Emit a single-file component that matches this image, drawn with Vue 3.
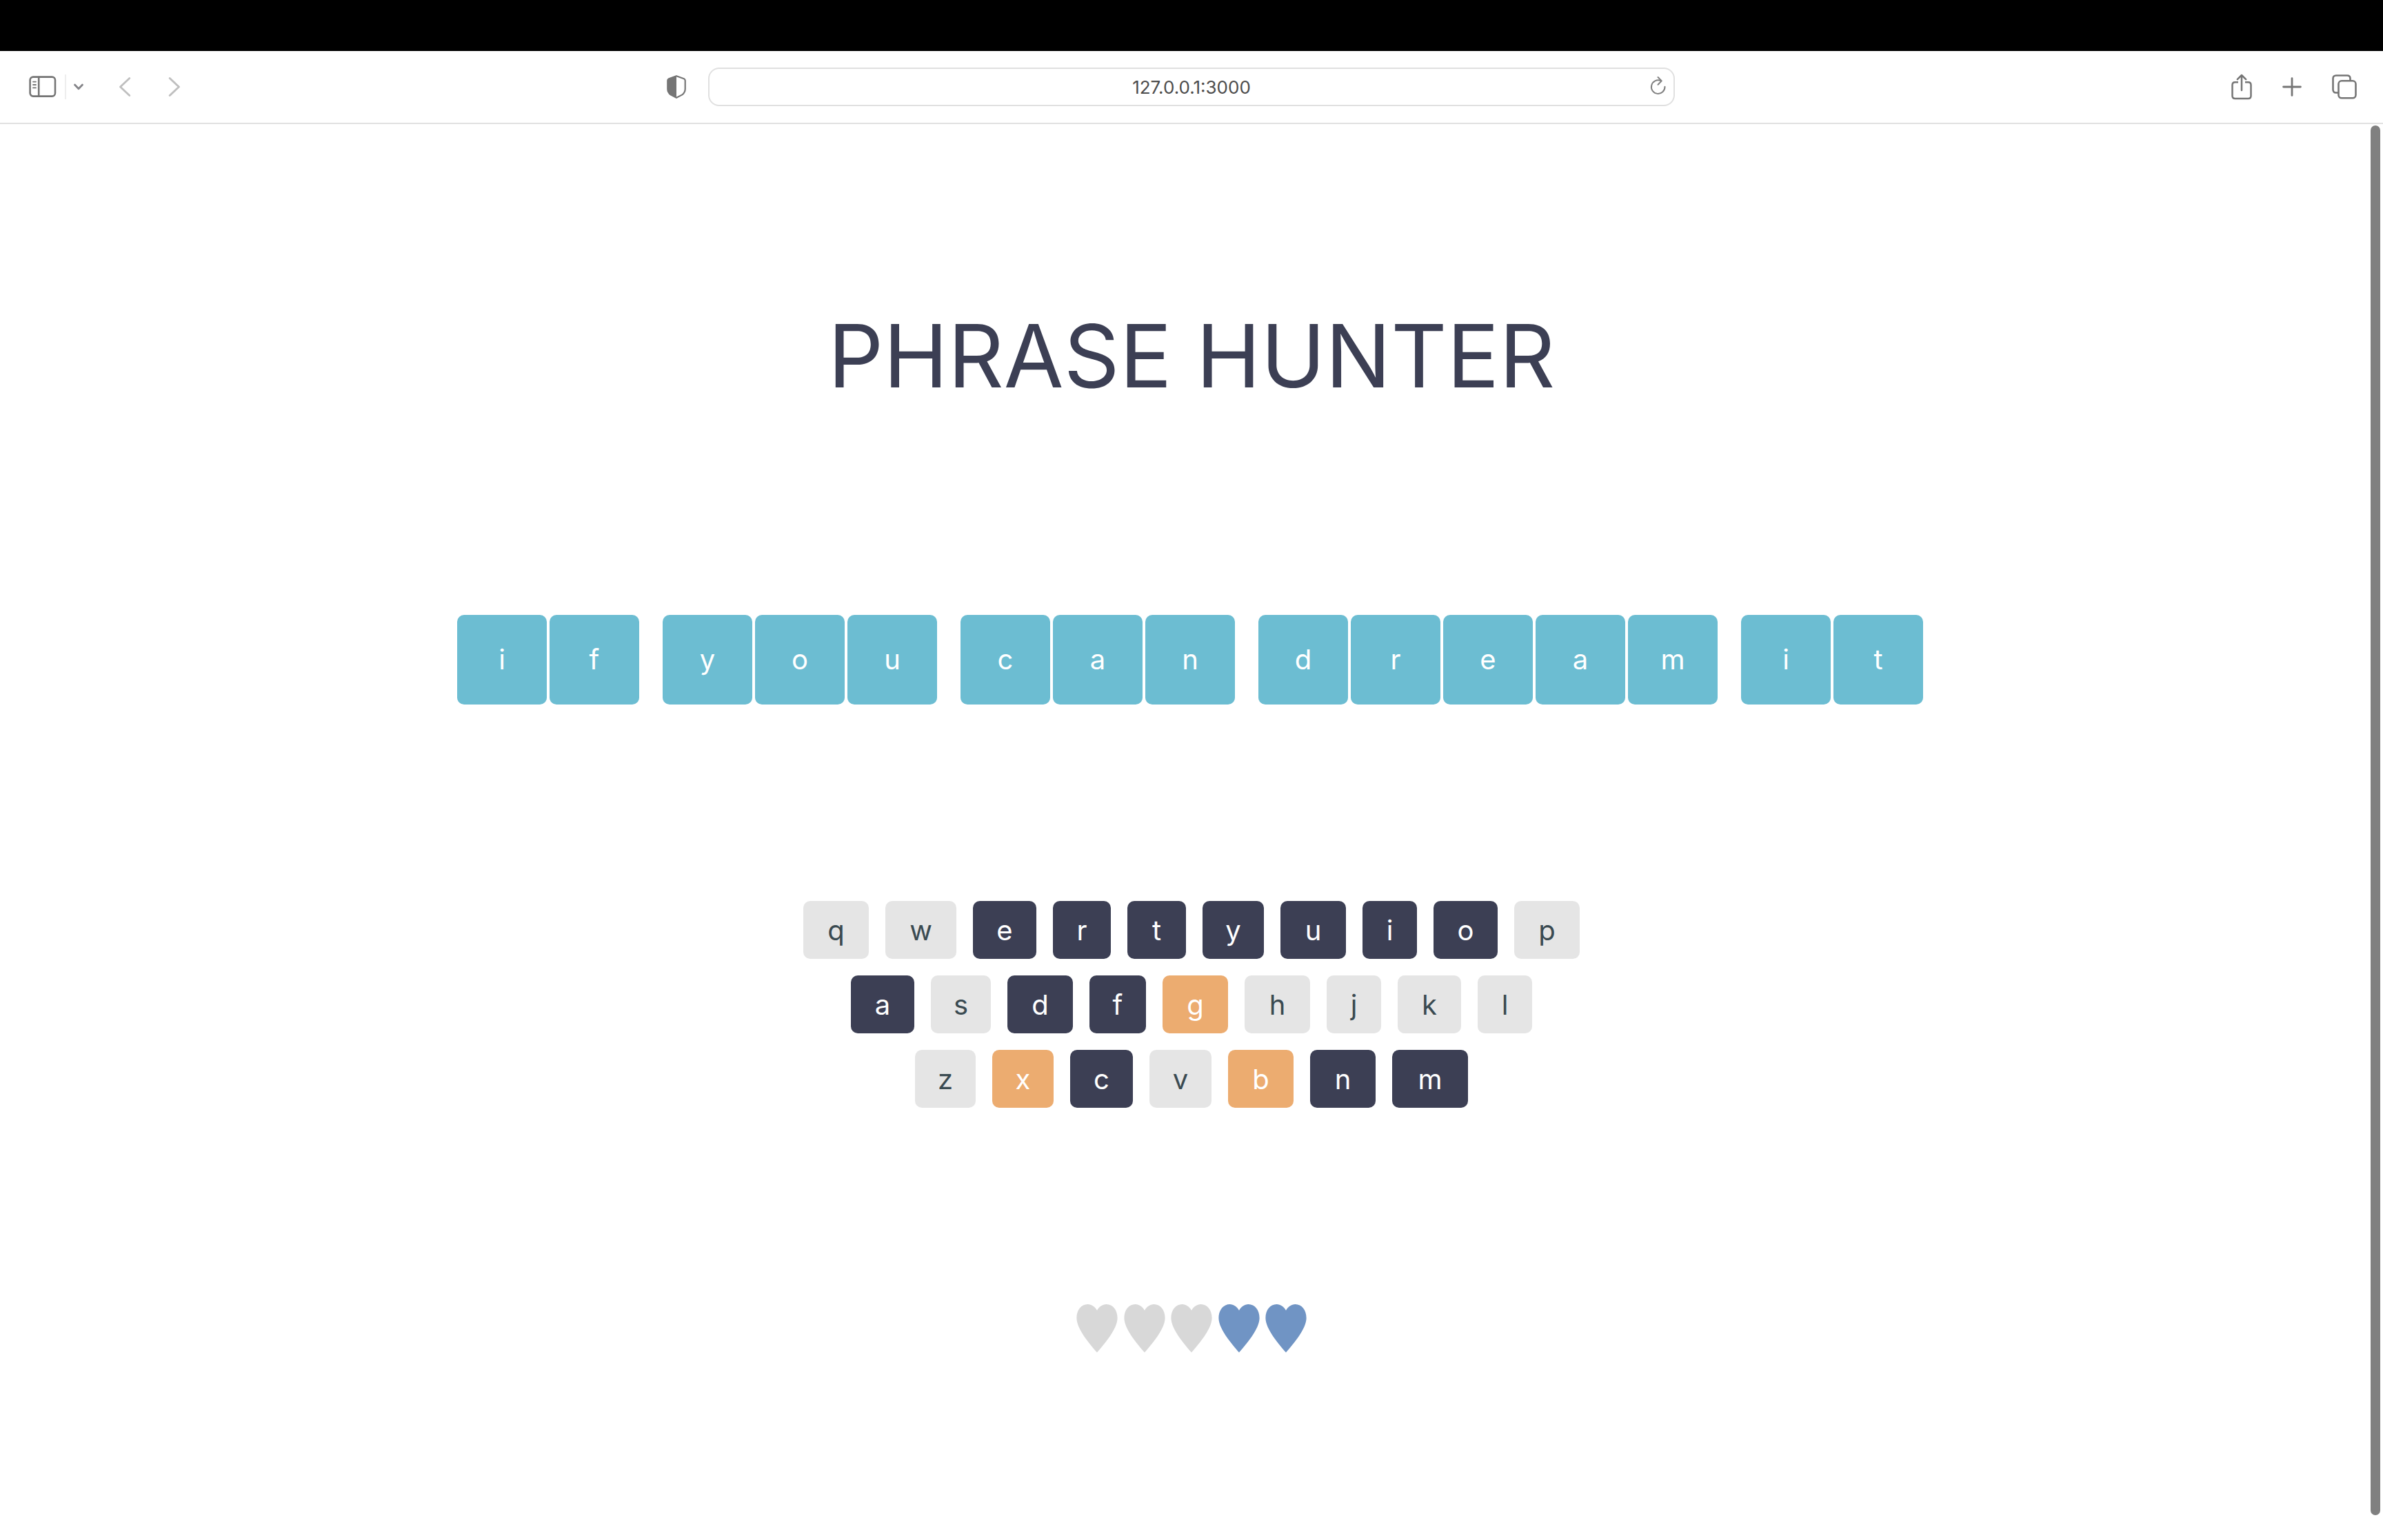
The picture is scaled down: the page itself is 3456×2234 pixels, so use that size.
<script setup>
import { ref } from 'vue'

const address = ref('127.0.0.1:3000')

const words = ['if', 'you', 'can', 'dream', 'it']

const keyWidths = {
  q: 95, w: 103, e: 92, r: 84, t: 85, y: 89, u: 95, i: 79, o: 93, p: 95,
  a: 92, s: 87, d: 95, f: 82, g: 95, h: 95, j: 79, k: 92, l: 79,
  z: 88, x: 89, c: 91, v: 90, b: 95, n: 95, m: 110,
}
const rows = ['qwertyuiop', 'asdfghjkl', 'zxcvbnm']
const missed = 'gxb'

function keyState(letter) {
  if (words.join('').includes(letter)) return 'chosen'
  if (missed.includes(letter)) return 'wrong'
  return ''
}

const lives = [false, false, false, true, true]
</script>

<template>
  <div class="window">
    <div class="menu-strip"></div>
    <header class="toolbar">
      <div class="tools tools-left">
        <button class="tool" aria-label="Sidebar">
          <svg width="40" height="32" viewBox="0 0 40 32" fill="none" stroke="#757575" stroke-width="2.6" stroke-linecap="round">
            <rect x="1.6" y="1.6" width="36.4" height="28" rx="4.5" />
            <path d="M14.2 2v27.5" />
            <path d="M6 8.6h4M6 13h4M6 17.4h4" stroke-width="1.8" />
          </svg>
        </button>
        <span class="divider"></span>
        <button class="tool chevron" aria-label="Tab groups">
          <svg width="16" height="12" viewBox="0 0 16 12" fill="none" stroke="#858589" stroke-width="2.8" stroke-linecap="round" stroke-linejoin="round">
            <path d="M2.5 3l5.5 5.800L13.500 3" />
          </svg>
        </button>
        <button class="tool back" aria-label="Back">
          <svg width="18" height="30" viewBox="0 0 18 30" fill="none" stroke="#bfbfbf" stroke-width="2.8" stroke-linecap="round" stroke-linejoin="round">
            <path d="M15.800 2.500L2.500 15l13.300 12.500" />
          </svg>
        </button>
        <button class="tool forward" aria-label="Forward">
          <svg width="18" height="30" viewBox="0 0 18 30" fill="none" stroke="#bfbfbf" stroke-width="2.8" stroke-linecap="round" stroke-linejoin="round">
            <path d="M2.200 2.500L15.500 15L2.200 27.500" />
          </svg>
        </button>
        <button class="tool shield" aria-label="Privacy report">
          <svg width="28" height="34" viewBox="0 0 28 34">
            <path d="M14 1.200L25 5.200Q26.700 6 26.700 7.800V20Q26.700 25.500 22 28.600L14 32.800L6 28.600Q1.300 25.500 1.300 20V7.800Q1.300 6 3 5.200Z" fill="none" stroke="#757575" stroke-width="2.2" stroke-linejoin="round" />
            <path d="M14 1.200L3 5.200Q1.300 6 1.300 7.800V20Q1.300 25.500 6 28.600L14 32.800Z" fill="#757575" />
          </svg>
        </button>
      </div>
      <div class="address">
        <input v-model="address" type="text" aria-label="Address" />
        <button class="tool reload" aria-label="Reload">
          <svg width="24" height="28" viewBox="0 0 24 28" fill="none" stroke="#808080" stroke-width="2" stroke-linecap="round" stroke-linejoin="round">
            <path d="M21.500 15.800A9.800 9.800 0 1 1 15.500 7.100" />
            <path d="M11.500 2l5.300 5.400l-5.300 5.400" />
          </svg>
        </button>
      </div>
      <div class="tools tools-right">
        <button class="tool" aria-label="Share">
          <svg width="30" height="38" viewBox="0 0 30 38" fill="none" stroke="#757575" stroke-width="2.5" stroke-linejoin="round">
            <path d="M10 12.300H5.500Q1.500 12.300 1.500 16.300V32Q1.500 36 5.500 36H24.500Q28.500 36 28.500 32V16.300Q28.500 12.300 24.500 12.300H20" />
            <path d="M15 24V2.200M8.800 8.200L15 2L21.200 8.200" stroke-linecap="round" />
          </svg>
        </button>
        <button class="tool" aria-label="New tab">
          <svg width="28" height="28" viewBox="0 0 28 28" fill="none" stroke="#757575" stroke-width="2.8" stroke-linecap="round">
            <path d="M14 1.600v24.800M1.600 14h24.800" />
          </svg>
        </button>
        <button class="tool" aria-label="Tab overview">
          <svg width="36" height="36" viewBox="0 0 36 36" fill="none" stroke="#757575" stroke-width="2.6">
            <path d="M9 26.500H6Q1.500 26.500 1.500 22V6Q1.500 1.500 6 1.500H22Q26.500 1.500 26.500 6V9" />
            <rect x="9.500" y="9.300" width="25" height="25" rx="4.5" />
          </svg>
        </button>
      </div>
    </header>

    <main class="game">
      <h1>PHRASE HUNTER</h1>
      <div class="phrase">
        <ul v-for="word in words" :key="word" class="word">
          <li v-for="(letter, i) in word" :key="i">{{ letter }}</li>
        </ul>
      </div>
      <div class="keyboard">
        <div v-for="row in rows" :key="row" class="keyrow">
          <button
            v-for="letter in row"
            :key="letter"
            class="key"
            :class="keyState(letter)"
            :style="{ width: keyWidths[letter] + 'px' }"
          >{{ letter }}</button>
        </div>
      </div>
      <ol class="lives">
        <li v-for="(alive, i) in lives" :key="i" :class="{ alive }">
          <svg width="60" height="70" viewBox="0 0 60 70">
            <path d="M30 9C27 3.500 22 0 16.500 0C7 0 .4 8.500 .4 20C.4 36 20 58.500 30 70C40 58.500 59.600 36 59.600 20C59.600 8.500 53 0 43.500 0C38 0 33 3.500 30 9Z" />
          </svg>
        </li>
      </ol>
      <div class="scroll-thumb"></div>
    </main>
  </div>
</template>

<style>
body {
  margin: 0;
  background: #fff;
}
</style>

<style scoped>
.window {
  min-height: 100vh;
  display: flex;
  flex-direction: column;
  font-family: Inter, "Liberation Sans", sans-serif;
}
.menu-strip {
  height: 74px;
  background: #000;
}
.toolbar {
  display: grid;
  grid-template-columns: 1fr minmax(0, 1402px) 1fr;
  align-items: center;
  height: 104px;
  border-bottom: 2px solid #e0e0e0;
}
.tools {
  display: flex;
  align-items: center;
}
.tools-left {
  padding: 0 32px 0 42px;
}
.tools-right {
  justify-content: flex-end;
  gap: 44px;
  padding-right: 38px;
}
.tool {
  display: flex;
  padding: 0;
  border: 0;
  background: none;
}
.divider {
  width: 2px;
  height: 36px;
  margin-left: 12px;
  background: #eee;
}
.chevron {
  margin-left: 10px;
}
.back {
  margin-left: 50px;
}
.forward {
  margin-left: 54px;
}
.shield {
  margin-left: auto;
}
.address {
  position: relative;
}
.address input {
  display: block;
  box-sizing: border-box;
  width: 100%;
  height: 56px;
  padding: 0 48px;
  border: 2px solid #e0e0e0;
  border-radius: 16px;
  background: #fff;
  color: #4c4c4c;
  font: 26px Inter, "Liberation Sans", sans-serif;
  text-align: center;
}
.reload {
  position: absolute;
  top: 12px;
  right: 12px;
}
.game {
  position: relative;
  flex: 1;
  display: flex;
  flex-direction: column;
  align-items: center;
  padding: 260px 0;
}
h1 {
  margin: 0 0 300px;
  color: #3c3f54;
  font-size: 126px;
  font-weight: 400;
  line-height: 152px;
}
.phrase {
  display: flex;
  gap: 30px;
  margin-bottom: 285px;
}
.word,
.lives {
  display: flex;
  margin: 0;
  padding: 0;
  list-style: none;
}
.word li {
  width: 130px;
  height: 130px;
  margin-right: 4px;
  border-radius: 10px;
  background: #6cbdd2;
  color: #fff;
  font-size: 40px;
  line-height: 130px;
  text-align: center;
}
.keyboard {
  display: flex;
  flex-direction: column;
  gap: 24px;
  margin-bottom: 285px;
}
.keyrow {
  display: flex;
  justify-content: center;
  gap: 24px;
}
.key {
  height: 84px;
  padding: 0;
  border: 0;
  border-radius: 10px;
  background: #e5e5e5;
  color: #3a4a51;
  font: 40px Inter, "Liberation Sans", sans-serif;
}
.key.chosen {
  background: #3c3f54;
  color: #fff;
}
.key.wrong {
  background: #ecac70;
  color: #fff;
}
.lives {
  justify-content: space-between;
  width: 334px;
}
.lives li {
  display: flex;
}
.lives svg {
  fill: #d8d8d8;
}
.lives .alive svg {
  fill: #7094c4;
}
.scroll-thumb {
  position: absolute;
  top: 2px;
  right: 4px;
  bottom: 36px;
  width: 14px;
  border-radius: 7px;
  background: #808080;
}
</style>
